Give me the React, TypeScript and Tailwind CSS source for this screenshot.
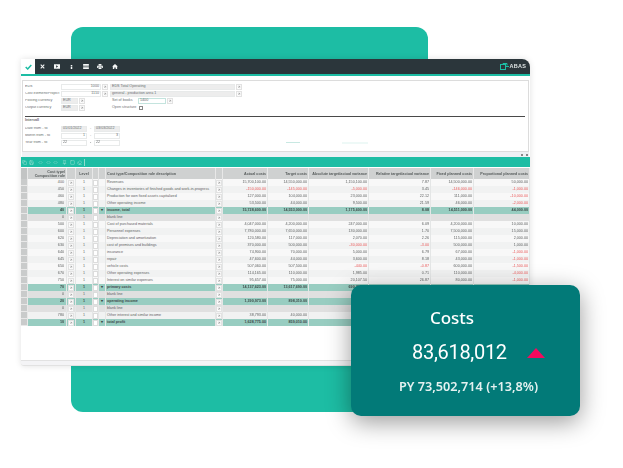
import React from "react";
import { ArrowUpRight, Copy, Save, ChevronsLeftRight, Square, Eraser, Pin } from "lucide-react";

type Row = { code: string; desc: string; v?: string[]; kind?: "total" | "blank"; };

const rows: Row[] = [
  { code: "400", desc: "Revenues", v: ["15,700,100.00", "14,550,000.00", "1,150,100.00", "7.87", "14,500,000.00", "50,000.00"] },
  { code: "450", desc: "Changes in inventories of finished goods and work-in-progress", v: ["-150,000.00", "-145,000.00", "-5,000.00", "3.45", "-146,000.00", "-1,000.00"] },
  { code: "460", desc: "Production for own fixed assets capitalized", v: ["127,000.00", "104,000.00", "23,000.00", "22.12", "111,000.00", "-10,000.00"] },
  { code: "480", desc: "Other operating income", v: ["53,500.00", "44,000.00", "9,500.00", "21.59", "46,000.00", "-2,000.00"] },
  { code: "40", desc: "income, total", kind: "total", v: ["15,728,600.00", "14,553,000.00", "1,175,600.00", "8.08", "14,511,000.00", "44,000.00"] },
  { code: "0", desc: "blank line", kind: "blank" },
  { code: "500", desc: "Cost of purchased materials", v: ["4,047,000.00", "4,200,000.00", "247,000.00", "6.09", "4,200,000.00", "10,000.00"] },
  { code: "600", desc: "Personnel expenses", v: ["7,780,000.00", "7,650,000.00", "130,000.00", "1.70", "7,500,000.00", "15,000.00"] },
  { code: "620", desc: "Depreciation and amortization", v: ["120,580.00", "117,000.00", "2,070.00", "2.26", "115,000.00", "2,000.00"] },
  { code: "630", desc: "cost of premises and buildings", v: ["370,000.00", "500,000.00", "-30,000.00", "-3.00", "500,000.00", "1,000.00"] },
  { code: "640", desc: "insurance", v: ["74,900.00", "70,000.00", "5,000.00", "6.79", "67,000.00", "-1,000.00"] },
  { code: "645", desc: "repair", v: ["47,600.00", "44,000.00", "3,600.00", "8.18", "43,000.00", "-1,000.00"] },
  { code: "650", desc: "vehicle costs", v: ["507,060.00", "507,500.00", "-440.00", "-0.87", "600,000.00", "-1,500.00"] },
  { code: "670", desc: "Other operating expenses", v: ["114,165.00", "110,000.00", "1,985.00", "0.71", "110,000.00", "-4,000.00"] },
  { code: "750", desc: "Interest on similar expenses", v: ["95,657.00", "75,000.00", "20,107.50", "26.87", "80,000.00", "-1,000.00"] },
  { code: "70", desc: "primary costs", kind: "total", v: ["14,137,623.00", "13,617,690.00", "690,735.00", "5.02", "13,350,000.00", "134,000.00"] },
  { code: "0", desc: "blank line", kind: "blank" },
  { code: "20", desc: "operating income", kind: "total", v: ["1,390,973.00", "898,310.00", "", "", "", ""] },
  { code: "0", desc: "blank line", kind: "blank" },
  { code: "780", desc: "Other interest and similar income", v: ["38,793.00", "40,000.00", "", "", "", ""] },
  { code: "10", desc: "total profit", kind: "total", v: ["1,628,775.00", "859,010.00", "", "", "", ""] },
];

const gridCols = "grid-cols-[7px_39px_9px_17px_6px_7px_110px_7px_45px_41px_60px_62px_43px_56px]";

function LinkBtn({ className = "" }: { className?: string }) {
  return (
    <span className={`flex items-center justify-center bg-white border border-[#e2e2e2] text-[#666] ${className}`}>
      <ArrowUpRight size={4} strokeWidth={2} />
    </span>
  );
}

function Field({ w, children, gray, right }: { w: string; children?: React.ReactNode; gray?: boolean; right?: boolean }) {
  return (
    <span className={`${w} h-[6px] flex items-center px-[1px] border border-[#e8eaea] ${gray ? "bg-[#ededed]" : "bg-white"} ${right ? "justify-end" : ""}`}>
      {children}
    </span>
  );
}

function Label({ children }: { children: React.ReactNode }) {
  return <span className="w-[36px] truncate">{children}</span>;
}

function FormPanel() {
  return (
    <div className="mx-[1px] mt-[4px] h-[72px] border border-[#dcdcdc] bg-white px-[2px] pt-[3px] text-[3.7px] leading-none text-[#6b6f70]">
      <div className="flex flex-col gap-[1px]">
        <div className="flex items-center h-[6px]">
          <Label>EDS</Label>
          <Field w="w-[40px]" right>1000</Field>
          <LinkBtn className="ml-[1px] w-[6px] h-[6px]" />
          <span className="w-[2px]" />
          <Field w="w-[125px]" gray>EDS Total Operating</Field>
          <LinkBtn className="ml-[1px] w-[6px] h-[6px]" />
        </div>
        <div className="flex items-center h-[6px]">
          <Label>Cost element/Project</Label>
          <Field w="w-[40px]" right>1110</Field>
          <LinkBtn className="ml-[1px] w-[6px] h-[6px]" />
          <span className="w-[2px]" />
          <Field w="w-[125px]" gray>general - production area 1</Field>
          <LinkBtn className="ml-[1px] w-[6px] h-[6px]" />
        </div>
        <div className="flex items-center h-[6px]">
          <Label>Posting currency</Label>
          <Field w="w-[17px]" gray>EUR</Field>
          <LinkBtn className="ml-[1px] w-[6px] h-[6px]" />
          <span className="w-[27px]" />
          <span className="w-[26px]">Set of books</span>
          <span className="w-[28px] h-[6px] flex items-center px-[1px] border border-[#c4e4de] bg-white">1400</span>
          <LinkBtn className="ml-[1px] w-[6px] h-[6px]" />
        </div>
        <div className="flex items-center h-[6px]">
          <Label>Output currency</Label>
          <Field w="w-[17px]" gray>EUR</Field>
          <LinkBtn className="ml-[1px] w-[6px] h-[6px]" />
          <span className="w-[27px]" />
          <span className="w-[27px]">Open structure</span>
          <span className="w-[4px] h-[4px] border border-[#888] bg-white" />
        </div>
      </div>
      <div className="mt-[5px] mb-[1px] h-px mr-[1px] bg-[#4a4a4a]" />
      <div className="mt-[2px] font-bold">Intervall</div>
      <div className="mt-[3px] flex flex-col gap-[1px]">
        <div className="flex items-center h-[6px]">
          <Label>Date from - to</Label>
          <Field w="w-[26px]" gray>01/01/2022</Field>
          <span className="w-[7px] text-center">-</span>
          <Field w="w-[26px]" gray>03/03/2022</Field>
        </div>
        <div className="flex items-center h-[6px]">
          <Label>Month from - to</Label>
          <Field w="w-[26px]" right>1</Field>
          <span className="w-[7px] text-center">-</span>
          <Field w="w-[26px]" right>3</Field>
        </div>
        <div className="flex items-center h-[6px]">
          <Label>Year from - to</Label>
          <Field w="w-[26px]">22</Field>
          <span className="w-[7px] text-center">-</span>
          <Field w="w-[26px]">22</Field>
          <span className="ml-[166px] w-[14px] h-px bg-[#c8e8e2]" />
          <span className="ml-[42px] w-[26px] h-[2px] bg-[#eef9f7]" />
        </div>
      </div>
    </div>
  );
}

function HeaderRow() {
  const c = "flex items-center bg-[#cfd1d1] border-r border-[#e8e8e8] font-bold text-[#555a5a]";
  return (
    <div className={`grid ${gridCols} h-[11px] text-[3.7px] leading-[4px]`}>
      <span className="bg-[#c2c4c4] border-r border-[#e8e8e8]" />
      <span className={`${c} justify-end text-right pr-[1px]`}>Cost type/<br />Composition rule</span>
      <span className={c} />
      <span className={`${c} justify-center`}>Level</span>
      <span className={c} />
      <span className={c} />
      <span className={`${c} pl-[1px]`}>Cost type/Composition rule description</span>
      <span className={c} />
      <span className={`${c} justify-end pr-[1px]`}>Actual costs</span>
      <span className={`${c} justify-end pr-[1px]`}>Target costs</span>
      <span className={`${c} justify-end pr-[1px]`}>Absolute target/actual variance</span>
      <span className={`${c} justify-end pr-[1px]`}>Relative target/actual variance</span>
      <span className={`${c} justify-end pr-[1px]`}>Fixed planned costs</span>
      <span className={`${c} justify-end pr-[1px] whitespace-nowrap overflow-hidden`}>Proportional planned costs</span>
    </div>
  );
}

function DataRow({ r, i }: { r: Row; i: number }) {
  const total = r.kind === "total";
  const blank = r.kind === "blank";
  const bg = total ? "bg-[#98cdc1]" : blank ? "bg-[#e0e0e0]" : i % 2 ? "bg-[#f1f2f2]" : "bg-[#f8f8f8]";
  const txt = total ? "text-[#3d4a48]" : "text-[#5f6262]";
  const cell = `${bg} flex items-center border-r border-[#e4e6e6]`;
  const num = (s: string | undefined, k: number) => (
    <span key={k} className={`${cell} justify-end pr-[1px] ${s && s.startsWith("-") ? "text-[#ea5b5b]" : ""}`}>{s}</span>
  );
  return (
    <div className={`grid ${gridCols} h-[7px] text-[3.7px] leading-none ${txt} ${total ? "font-bold" : ""}`}>
      <span className="bg-[#c9cbcb] border-b border-[#e8e8e8] border-r" />
      <span className={`${cell} justify-end pr-[2px]`}>{r.code}</span>
      <span className={`${cell} justify-center`}><LinkBtn className="w-[6px] h-[6px]" /></span>
      <span className={`${cell} justify-center`}>1</span>
      <span className={`${cell} justify-center`}><span className="w-[6px] h-[6px] bg-white border border-[#dcdcdc]" /></span>
      <span className={`${cell} justify-center`}>{total ? "▾" : ""}</span>
      <span className={`${cell} pl-[1px] whitespace-nowrap overflow-hidden`}>{r.desc}</span>
      <span className={`${cell} justify-center`}><LinkBtn className="w-[6px] h-[6px]" /></span>
      {[0, 1, 2, 3, 4, 5].map((k) => num(r.v?.[k], k))}
    </div>
  );
}

function TopIcon({ children }: { children: React.ReactNode }) {
  return <span className="w-[14.500px] flex items-center justify-center text-[#f4f6f6]">{children}</span>;
}

function TopIcons() {
  return (
    <div className="flex items-center">
      <TopIcon><svg width="5" height="5" viewBox="0 0 7 7" stroke="currentColor" strokeWidth="1.500"><path d="M1 1l5 5M6 1L1 6" /></svg></TopIcon>
      <TopIcon><svg width="6" height="5" viewBox="0 0 9 7"><path fill="currentColor" fillRule="evenodd" d="M0 0h9v7H0zM3.200 1.700v3.600L6.200 3.500z" /></svg></TopIcon>
      <TopIcon><svg width="3" height="6" viewBox="0 0 6 8"><path fill="currentColor" d="M1.500 0h3v1.800h-3zM1.500 2.800h3V8h-3z" /></svg></TopIcon>
      <TopIcon><svg width="6" height="5" viewBox="0 0 8 7"><path fill="currentColor" d="M0 0h8v2.300H0zM0 3h8v1H0zM0 4.700h8V7H0z" /></svg></TopIcon>
      <TopIcon><svg width="6" height="5" viewBox="0 0 8 7"><path fill="currentColor" d="M2 0h4v2H2zM0 2.500h8V5.500H6.500V4h-5v1.500H0zM2 4.500h4V7H2z" /></svg></TopIcon>
      <TopIcon><svg width="6" height="5" viewBox="0 0 8 7"><path fill="currentColor" d="M4 0l4 3.500H7V7H5V4.800H3V7H1V3.500H0z" /></svg></TopIcon>
    </div>
  );
}

export default function App() {
  return (
    <div className="relative w-[623px] h-[468px] overflow-hidden bg-white font-['Liberation_Sans',sans-serif]">
      <div className="absolute left-[71px] top-[27px] w-[357px] h-[385px] rounded-[12px] bg-[#1dbda4]" />

      <div className="absolute left-[21px] top-[59px] w-[509px] h-[307px] rounded-tr-[8px] rounded-b-[3px] bg-white shadow-[0_0_6px_rgba(0,0,0,0.12)] flex flex-col">
        <div className="h-[15px] bg-[#2b363b] rounded-tr-[8px] flex items-center">
          <span className="w-[14px] h-full bg-white flex items-center justify-center text-[#1dbda4]">
            <svg width="7" height="6" viewBox="0 0 7 6" fill="none" stroke="currentColor" strokeWidth="1.500"><path d="M.7 3l2 2L6.300 1" /></svg>
          </span>
          <TopIcons />
          <div className="ml-auto flex items-center gap-[1px] pr-[4px] text-[5.500px] font-bold text-[#dfe5e5] tracking-[0.2px] blur-[0.25px]">
            <svg width="9" height="7" viewBox="0 0 9 7" fill="none" stroke="#1dbda4" strokeWidth="1"><rect x="0.5" y="1.500" width="5" height="5" /><path d="M3 1.500V.5h4v2M5.500 3.500H9" /></svg>
            <span>ABAS</span>
          </div>
        </div>
        <div className="h-[2px] bg-[#1dbda4]" />
        <div className="blur-[0.3px] flex flex-col flex-1">
          <FormPanel />
          <div className="mx-[1px] h-[5px] bg-[#eef0f4] flex items-center justify-end gap-[3px] pr-[1px] text-[#777]">
            <span className="w-[2px] h-[2px] bg-[#888]" />
            <span className="w-[2px] h-[2px] bg-[#888]" />
          </div>
          <div className="h-[10px] bg-[#1dbda4] flex items-center pl-[0.500px] text-[#b5e6dd]">
            <Copy size={5} strokeWidth={2} />
            <Save size={5} strokeWidth={2} className="ml-[2px]" />
            <ChevronsLeftRight size={5} strokeWidth={2} className="ml-[4px]" />
            <ChevronsLeftRight size={5} strokeWidth={2} className="ml-[3px]" />
            <ChevronsLeftRight size={5} strokeWidth={2} className="ml-[2px]" />
            <Pin size={5} strokeWidth={2} className="ml-[4px]" />
            <Square size={5} strokeWidth={2} className="ml-[3px]" />
            <Eraser size={5} strokeWidth={2} className="ml-[2px]" />
            <span className="ml-[2px] w-px h-[7px] bg-[#8fdccd]" />
          </div>
          <div className="h-px bg-white" />
          <HeaderRow />
          {rows.map((r, i) => <DataRow key={i} r={r} i={i} />)}
        </div>
        <div className="h-[6px] bg-[#f4f4f6] border-y border-[#e2e2e2] rounded-b-[3px]" />
      </div>

      <div className="absolute left-[351px] top-[285px] w-[229px] h-[131px] rounded-[10px] bg-[#027a78] shadow-[0_6px_24px_rgba(0,0,0,0.4)] flex flex-col items-center text-white font-['Noto_Sans',sans-serif]">
        <div className="mt-[20px] h-[26px] text-[17px] leading-[26px] font-medium pr-[27px]">Costs</div>
        <div className="mt-[6px] h-[30px] w-full flex items-center pl-[61px]">
          <span className="w-[94px] whitespace-nowrap font-['Roboto',sans-serif] text-[20px] leading-[30px] tracking-[-0.3px]">83,618,012</span>
          <span className="ml-[21px] mt-[1px] w-0 h-0 border-l-[9px] border-r-[9px] border-b-[10px] border-l-transparent border-r-transparent border-b-[#f50a5e]" />
        </div>
        <div className="mt-[9px] pl-[6px] text-[12.700px] leading-[20px] font-semibold text-[#e4f1f0] whitespace-nowrap">PY 73,502,714 (+13,8%)</div>
      </div>
    </div>
  );
}
